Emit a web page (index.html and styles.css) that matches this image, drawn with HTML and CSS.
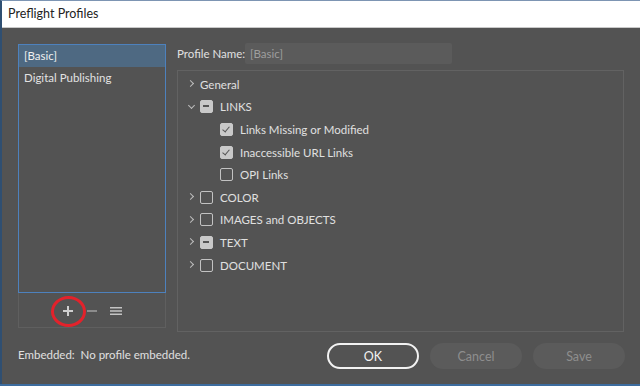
FILE: index.html
```html
<!DOCTYPE html>
<html lang="en">
<head>
  <meta charset="UTF-8" />
  <title>Preflight Profiles</title>
  <link rel="stylesheet" href="styles.css">
</head>
<body>
  <div class="window">
    <div class="titlebar">Preflight Profiles</div>
    <div class="content">
      <div class="main">
        <div class="side">
          <ul class="profiles">
            <li class="selected">[Basic]</li>
            <li>Digital Publishing</li>
          </ul>
          <div class="tools">
            <span class="tool add">
              <svg width="12" height="12" viewBox="0 0 12 12"><path d="M6 1v10M1 6h10" stroke="#cfcfcf" stroke-width="2"/></svg>
              <span class="ring"></span>
            </span>
            <span class="tool">
              <svg width="12" height="12" viewBox="0 0 12 12"><path d="M1 6h10" stroke="#8c8c8c" stroke-width="2"/></svg>
            </span>
            <span class="tool">
              <svg width="13" height="12" viewBox="0 0 13 12"><path d="M0 2.5h13M0 6h13M0 9.5h13" stroke="#c4c4c4" stroke-width="1.6"/></svg>
            </span>
          </div>
        </div>
        <div class="detail">
          <div class="name-row">
            <span class="name-label">Profile Name:</span>
            <div class="name-field">[Basic]</div>
          </div>
          <div class="tree">
            <div class="row"><span class="chev right"></span><span class="text">General</span></div>
            <div class="row"><span class="chev down"></span><span class="box mixed"></span><span class="text">LINKS</span></div>
            <div class="row child"><span class="box checked"></span><span class="text">Links Missing or Modified</span></div>
            <div class="row child"><span class="box checked"></span><span class="text">Inaccessible URL Links</span></div>
            <div class="row child"><span class="box"></span><span class="text">OPI Links</span></div>
            <div class="row"><span class="chev right"></span><span class="box"></span><span class="text">COLOR</span></div>
            <div class="row"><span class="chev right"></span><span class="box"></span><span class="text">IMAGES and OBJECTS</span></div>
            <div class="row"><span class="chev right"></span><span class="box mixed"></span><span class="text">TEXT</span></div>
            <div class="row"><span class="chev right"></span><span class="box"></span><span class="text">DOCUMENT</span></div>
          </div>
        </div>
      </div>
      <div class="footer">
        <div class="embedded">Embedded:&nbsp; No profile embedded.</div>
        <div class="buttons">
          <button class="btn primary">OK</button>
          <button class="btn">Cancel</button>
          <button class="btn">Save</button>
        </div>
      </div>
    </div>
  </div>
</body>
</html>
```

FILE: styles.css
```css
/* Base */
body {
  margin: 0;
  width: 640px;
  height: 386px;
  overflow: hidden;
  background: #3d6c9e;
  font-family: Lato, "Noto Sans", sans-serif;
  font-size: 11.5px;
  color: #dcdcdc;
}
.window {
  height: 384px;
  border-top: 1px solid #7d95b3;
  box-sizing: border-box;
  border-left: 2px solid #2f4f72;
  display: flex;
  flex-direction: column;
}
.titlebar {
  height: 26px;
  line-height: 26px;
  padding-left: 6px;
  background: #fff;
  color: #222;
  font-size: 12.5px;
  border-bottom: 1px solid #c9c9c9;
}
.content {
  flex: 1;
  background: #535353;
  padding: 16px 15px 0 16px;
}
.main {
  display: flex;
  gap: 11px;
}

/* Profile list */
.side {
  width: 148px;
  display: flex;
  flex-direction: column;
}
.profiles {
  list-style: none;
  margin: 0;
  padding: 0;
  height: 249px;
  box-sizing: border-box;
  border: 1px solid #4d81bd;
}
.profiles li {
  height: 22px;
  line-height: 22px;
  padding-left: 5px;
  color: #e2e2e2;
}
.profiles li.selected {
  background: #4e6982;
  color: #f0f0f0;
}
.tools {
  height: 35px;
  box-sizing: border-box;
  border: 1px solid #5f5f5f;
  border-top: 0;
  display: flex;
  justify-content: center;
  align-items: center;
  gap: 12px;
  padding-top: 2px;
}
.tool {
  position: relative;
  width: 12px;
  height: 12px;
  display: flex;
}
.ring {
  position: absolute;
  left: -11px;
  top: -9px;
  width: 29px;
  height: 25px;
  border: 3px solid #e3222b;
  border-radius: 50%;
}

/* Detail panel */
.detail {
  width: 447px;
}
.name-row {
  display: flex;
  align-items: center;
  height: 21px;
  margin-top: -1px;
}
.name-label {
  width: 68px;
  white-space: nowrap;
  color: #e0e0e0;
}
.name-field {
  width: 202px;
  height: 21px;
  line-height: 21px;
  padding-left: 5px;
  background: #5b5b5b;
  color: #9e9e9e;
  border-radius: 2px;
}
.tree {
  margin-top: 6px;
  height: 262px;
  box-sizing: border-box;
  border: 1px solid #626262;
  padding-top: 2px;
}
.row {
  height: 22.6px;
  display: flex;
  align-items: center;
  padding-left: 9px;
}
.row.child {
  padding-left: 42px;
}
.row .text {
  color: #e0e0e0;
}
.chev {
  width: 10px;
  height: 10px;
  margin-right: 3px;
  position: relative;
}
.chev::after {
  content: "";
  position: absolute;
  width: 4px;
  height: 4px;
  border-right: 1px solid #bcbcbc;
  border-bottom: 1px solid #bcbcbc;
}
.chev.right::after {
  left: 1px;
  top: 2px;
  transform: rotate(-45deg);
}
.chev.down::after {
  left: 2px;
  top: 1px;
  transform: rotate(45deg);
}
.box {
  width: 13px;
  height: 13px;
  box-sizing: border-box;
  border: 1.5px solid #c2c2c2;
  border-radius: 2px;
  margin-right: 7px;
  position: relative;
}
.box.checked,
.box.mixed {
  background: #c9c9c9;
  border-color: #c9c9c9;
}
.box.checked::after {
  content: "";
  position: absolute;
  left: 3px;
  top: 1px;
  width: 3px;
  height: 6px;
  border-right: 1.5px solid #555;
  border-bottom: 1.5px solid #555;
  transform: rotate(40deg);
}
.box.mixed::after {
  content: "";
  position: absolute;
  left: 2px;
  top: 4px;
  width: 6px;
  height: 2px;
  background: #555;
}

/* Footer */
.footer {
  display: flex;
  align-items: center;
  justify-content: space-between;
  margin-top: 11px;
}
.embedded {
  color: #e0e0e0;
  margin-top: -3px;
}
.buttons {
  display: flex;
  gap: 11px;
}
.btn {
  width: 92px;
  height: 26px;
  border-radius: 13px;
  border: 0;
  background: #5b5b5b;
  color: #8e8e8e;
  font-family: inherit;
  font-size: 12.5px;
  padding: 0;
}
.btn.primary {
  background: transparent;
  border: 2px solid #f2f2f2;
  color: #f2f2f2;
}
```
